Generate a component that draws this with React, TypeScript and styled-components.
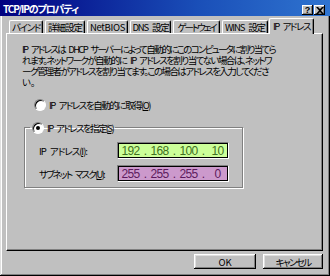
import { useLayoutEffect, useRef, useState, type ReactNode } from 'react';
import styled, { createGlobalStyle } from 'styled-components';

const GlobalStyle = createGlobalStyle`
  html, body {
    margin: 0;
    padding: 0;
    background: #c0c0c0;
  }
  body {
    font-family: "Noto Sans CJK JP", "Liberation Sans", sans-serif;
    font-size: 9.5px;
    font-feature-settings: 'palt';
    color: #000;
  }
`;

// squeezes (or spreads) a label to the width it has in the old bitmap font
const Fit = ({ w, children }: { w: number; children: ReactNode }) => {
  const ref = useRef<HTMLSpanElement>(null);
  const [ls, setLs] = useState<number | null>(null);

  useLayoutEffect(() => {
    const measure = () => {
      const el = ref.current;
      if (!el) return;
      const prev = el.style.letterSpacing;
      el.style.letterSpacing = '0px';
      const natural = el.getBoundingClientRect().width;
      el.style.letterSpacing = prev;
      const n = (el.textContent || '').length || 1;
      setLs((w - natural) / n);
    };
    measure();
    document.fonts?.ready.then(measure);
  }, [w]);

  return (
    <FitText ref={ref} style={ls !== null ? { letterSpacing: `${ls}px` } : undefined}>
      {children}
    </FitText>
  );
};

const tabs = [
  { label: 'バインド', w: 34, tw: 28 },
  { label: '詳細設定', w: 40, tw: 34 },
  { label: 'NetBIOS', w: 41, tw: 35 },
  { label: 'DNS 設定', w: 41, tw: 36 },
  { label: 'ゲートウェイ', w: 47, tw: 38 },
  { label: 'WINS 設定', w: 46, tw: 40 },
  { label: 'IP アドレス', w: 45, tw: 37, active: true },
];

const App = () => (
  <>
    <GlobalStyle />
    <Window>
      <TitleBar>
        <TitleText>
          <Fit w={75}>TCP/IPのプロパティ</Fit>
        </TitleText>
        <CaptionButtons>
          <CaptionButton>?</CaptionButton>
          <CaptionButton>
            <svg width="8" height="7" viewBox="0 0 8 7">
              <path d="M0 0h2l2 2 2-2h2L5 3.5 8 7H6L4 5 2 7H0l3-3.5z" fill="#000" />
            </svg>
          </CaptionButton>
        </CaptionButtons>
      </TitleBar>

      <TabStrip>
        {tabs.map((t) => (
          <Tab key={t.label} $w={t.w} $active={!!t.active}>
            <Fit w={t.tw}>{t.label}</Fit>
          </Tab>
        ))}
      </TabStrip>

      <Panel>
        <Intro>
          <Fit w={253}>IP アドレスは DHCP サーバーによって自動的にこのコンピュータに割り当てら</Fit>
          <Fit w={249}>れます。ネットワークが自動的に IP アドレスを割り当てない場合は、ネットワ</Fit>
          <Fit w={246}>ーク管理者がアドレスを割り当てます。この場合はアドレスを入力してくださ</Fit>
          <Fit w={13}>い。</Fit>
        </Intro>

        <RadioRow>
          <Radio />
          <Fit w={101}>
            IP アドレスを自動的に取得(<u>O</u>)
          </Fit>
        </RadioRow>

        <GroupBox>
          <Legend>
            <Radio $checked />
            <Fit w={66}>
              IP アドレスを指定(<u>S</u>)
            </Fit>
          </Legend>
          <FieldRow>
            <Fit w={48}>
              IP アドレス(<u>I</u>):
            </Fit>
            <AddressBox $bg="#ccff99" $fg="#3f6f22">
              <Octet>192</Octet>
              <Dot>.</Dot>
              <Octet>168</Octet>
              <Dot>.</Dot>
              <Octet>100</Octet>
              <Dot>.</Dot>
              <Octet>10</Octet>
            </AddressBox>
          </FieldRow>
          <FieldRow>
            <Fit w={65}>
              サブネット マスク(<u>U</u>):
            </Fit>
            <AddressBox $bg="#cc99cc" $fg="#5e1a5e">
              <Octet>255</Octet>
              <Dot>.</Dot>
              <Octet>255</Octet>
              <Dot>.</Dot>
              <Octet>255</Octet>
              <Dot>.</Dot>
              <Octet>0</Octet>
            </AddressBox>
          </FieldRow>
        </GroupBox>
      </Panel>

      <Footer>
        <PushButton $w={62}>OK</PushButton>
        <PushButton $w={60}>
          <Fit w={35}>キャンセル</Fit>
        </PushButton>
      </Footer>
    </Window>
  </>
);

const FitText = styled.span`
  display: inline-block;
  white-space: nowrap;
  word-spacing: 3px;
`;

const Window = styled.div`
  width: 330px;
  height: 276px;
  box-sizing: border-box;
  background: #c0c0c0;
  box-shadow: inset -1px -1px #000, inset 1px 0 #dfdfdf, inset -2px -2px #808080, inset 2px 0 #fff;
  display: flex;
  flex-direction: column;
  overflow: hidden;
`;

const TitleBar = styled.div`
  height: 16px;
  flex-shrink: 0;
  background: linear-gradient(90deg, #000080 0%, #1a4fb8 60%, #2f74d0 100%);
  display: flex;
  align-items: center;
  justify-content: space-between;
  padding: 0 5px 0 3px;
`;

const TitleText = styled.span`
  color: #fff;
  font-weight: bold;
  font-size: 10px;
`;

const CaptionButtons = styled.div`
  display: flex;
  gap: 1px;
  margin-top: 4px;
`;

const CaptionButton = styled.div`
  width: 11px;
  height: 10px;
  background: #c0c0c0;
  box-shadow: inset -1px -1px #000, inset 1px 1px #fff, inset -2px -2px #808080;
  display: flex;
  align-items: center;
  justify-content: center;
  font-family: "Liberation Sans", sans-serif;
  font-weight: bold;
  font-size: 9px;
  line-height: 1;
`;

const TabStrip = styled.div`
  display: flex;
  align-items: flex-end;
  padding-left: 9px;
  margin-top: 2px;
  height: 15px;
  flex-shrink: 0;
  position: relative;
  z-index: 1;
`;

const Tab = styled.div<{ $w: number; $active: boolean }>`
  width: ${(p) => p.$w}px;
  height: ${(p) => (p.$active ? 16 : 13)}px;
  margin: ${(p) => (p.$active ? '0 -2px -1px -1px' : '0 2px 0 0')};
  box-sizing: border-box;
  background: #c0c0c0;
  border-top: 1px solid #fff;
  border-left: 1px solid #fff;
  border-right: 1px solid #000;
  border-radius: 2px 2px 0 0;
  box-shadow: inset -1px 0 #808080;
  display: flex;
  align-items: center;
  justify-content: center;
  font-size: 9.5px;
  padding-bottom: ${(p) => (p.$active ? 2 : 0)}px;
`;

const Panel = styled.div`
  margin: 0 7px 0 6px;
  height: 218px;
  flex-shrink: 0;
  box-sizing: border-box;
  border-top: 1px solid #fff;
  border-left: 1px solid #fff;
  border-right: 1px solid #000;
  border-bottom: 1px solid #000;
  box-shadow: inset -1px -1px #808080;
  padding: 10px 12px 0 15px;
`;

const Intro = styled.div`
  display: flex;
  flex-direction: column;
  align-items: flex-start;
  line-height: 11px;
`;

const RadioRow = styled.div`
  display: flex;
  align-items: center;
  gap: 3px;
  height: 12px;
  margin: 11px 0 0 12px;
`;

const Radio = styled.span<{ $checked?: boolean }>`
  width: 12px;
  height: 12px;
  box-sizing: border-box;
  border-radius: 50%;
  background: #fff;
  border: 1px solid;
  border-color: #808080 #fff #fff #808080;
  box-shadow: inset 1px 1px #000;
  display: inline-flex;
  align-items: center;
  justify-content: center;
  flex-shrink: 0;
  &::after {
    content: '';
    width: 4px;
    height: 4px;
    border-radius: 50%;
    background: #000;
    display: ${(p) => (p.$checked ? 'block' : 'none')};
  }
`;

const GroupBox = styled.fieldset`
  margin: 10px 0 0 2px;
  width: 219px;
  box-sizing: border-box;
  border: 1px solid #808080;
  box-shadow: 1px 1px #fff, inset 1px 1px #fff;
  padding: 8px 13px 5px 14px;
  display: flex;
  flex-direction: column;
  gap: 6px;
`;

const Legend = styled.legend`
  display: flex;
  align-items: center;
  gap: 3px;
  height: 13px;
  padding: 0 2px;
  margin-left: -9px;
`;

const FieldRow = styled.div`
  display: flex;
  align-items: center;
  justify-content: space-between;
`;

const AddressBox = styled.div<{ $bg: string; $fg: string }>`
  width: 112px;
  height: 17px;
  flex-shrink: 0;
  box-sizing: border-box;
  background: ${(p) => p.$bg};
  color: ${(p) => p.$fg};
  border: 1px solid;
  border-color: #808080 #fff #fff #808080;
  box-shadow: inset 1px 1px #000, inset -1px -1px #000;
  display: flex;
  align-items: center;
  padding-left: 2px;
  font-family: "Liberation Sans", sans-serif;
  font-size: 12px;
  letter-spacing: -0.6px;
`;

const Octet = styled.span`
  width: 21px;
  text-align: center;
`;

const Dot = styled.span`
  width: 8px;
  text-align: center;
`;

const Footer = styled.div`
  display: flex;
  justify-content: flex-end;
  gap: 7px;
  padding-right: 7px;
  margin-top: 3px;
`;

const PushButton = styled.div<{ $w: number }>`
  width: ${(p) => p.$w}px;
  height: 15px;
  box-sizing: border-box;
  background: #c0c0c0;
  box-shadow: inset -1px -1px #000, inset 1px 1px #fff, inset -2px -2px #808080, inset 2px 2px #dfdfdf;
  display: flex;
  align-items: center;
  justify-content: center;
`;

export default App;
